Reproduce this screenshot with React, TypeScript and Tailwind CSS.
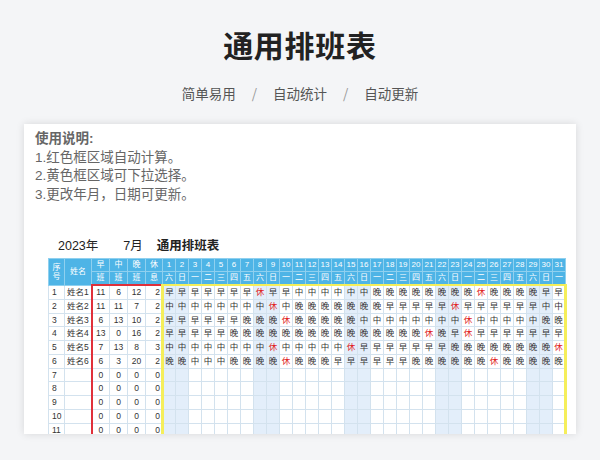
const rows: string[] = [
  "早早早早早早早休早早中中中中中中晚晚晚晚晚晚晚晚休晚晚晚晚早早",
  "中中中中中中中中休中晚晚晚晚晚晚晚早早早早早休早早早早早早中中",
  "早早早早早早晚晚晚休晚晚晚晚晚中中中中中中中中休中中中中中晚晚",
  "早早早早早晚晚晚晚晚晚晚晚晚晚晚晚晚晚晚休晚早休早早早早早早早",
  "中中中中中中中中休中中中中中休早早早早早早早晚晚晚晚晚晚晚晚休",
  "晚晚中中中晚晚晚晚休晚晚晚早早早早早早晚晚晚晚晚晚休晚晚晚晚晚",
];
const wk = ["六","日","一","二","三","四","五"];
const weekend = (d: number) => { const r = (d - 1) % 7; return r === 0 || r === 1; };

export default function App() {
  const days = Array.from({ length: 31 }, (_, i) => i + 1);
  const cell = "border border-[#d3e2ee] text-center p-0";
  return (
    <div className="w-[600px] h-[460px] bg-[#f4f5f7] overflow-hidden" style={{ fontFamily: '"Noto Sans CJK SC", "Noto Sans", sans-serif' }}>
      <div className="pt-[22px] text-center text-[30px] font-bold text-[#222] leading-[44px] tracking-wide">通用排班表</div>
      <div className="mt-[17px] flex justify-center gap-[16px] text-[13.5px] text-[#555] leading-[20px]">
        <span>简单易用</span><span className="text-[#999]">/</span><span>自动统计</span><span className="text-[#999]">/</span><span>自动更新</span>
      </div>
      <div className="mx-[24px] mt-[21px] h-[310px] bg-white shadow-[0_0_8px_rgba(0,0,0,0.12)] overflow-hidden pl-[11px] pt-[6px]">
        <div className="text-[13.5px] leading-[18.5px] text-[#666]" style={{ fontFamily: '"Liberation Sans", "Noto Sans CJK SC", sans-serif' }}>
          <div className="font-bold">使用说明:</div>
          <div>1.红色框区域自动计算。</div>
          <div>2.黄色框区域可下拉选择。</div>
          <div>3.更改年月，日期可更新。</div>
        </div>
        <div className="mt-[34px] ml-[23px] text-[12.5px] font-bold text-[#222] leading-[16px] flex" style={{ fontFamily: '"Liberation Sans", "Noto Sans CJK SC", sans-serif' }}>
          <span className="font-normal">2023年</span><span className="ml-[25px] font-normal">7月</span><span className="ml-[14px]">通用排班表</span>
        </div>
        <table className="ml-[13px] mt-[4px] border-collapse table-fixed text-[8.5px] text-[#333]" style={{ fontFamily: '"Liberation Sans", "Noto Sans CJK SC", sans-serif' }}>
          <colgroup>
            <col className="w-[16px]" /><col className="w-[27px]" />
            <col className="w-[18px]" /><col className="w-[18px]" /><col className="w-[18px]" /><col className="w-[17px]" />
            {days.map(d => <col key={d} className="w-[13px]" />)}
          </colgroup>
          <thead className="bg-[#4eb4e6] text-white text-[8px]">
            <tr className="h-[12px]">
              <th rowSpan={2} className="border border-[#8fd0ef] font-normal leading-[9px]">序<br />号</th>
              <th rowSpan={2} className="border border-[#8fd0ef] font-normal">姓名</th>
              {["早","中","晚","休"].map(s => <th key={s} className="border border-[#8fd0ef] font-normal">{s}</th>)}
              {days.map(d => <th key={d} className="border border-[#8fd0ef] font-normal">{d}</th>)}
            </tr>
            <tr className="h-[12px]">
              {["班","班","班","息"].map((s, i) => <th key={i} className="border border-[#8fd0ef] font-normal">{s}</th>)}
              {days.map(d => <th key={d} className="border border-[#8fd0ef] font-normal">{wk[(d - 1) % 7]}</th>)}
            </tr>
          </thead>
          <tbody>
            {Array.from({ length: 11 }, (_, r) => {
              const s = rows[r];
              const cnt = (c: string) => (s ? [...s].filter(x => x === c).length : 0);
              const top = r === 0 ? " border-t-2 border-t-[#e0303a]" : "";
              return (
                <tr key={r} className="h-[13.5px]">
                  <td className={cell + " text-left pl-[3px]"}>{r + 1}</td>
                  <td className={cell}>{s ? `姓名${r + 1}` : ""}</td>
                  <td className={cell + " border-l-2 border-l-[#e0303a]" + top}>{cnt("早")}</td>
                  <td className={cell + top}>{cnt("中")}</td>
                  <td className={cell + top}>{cnt("晚")}</td>
                  <td className={cell + " text-right pr-[1px] border-r-2 border-r-[#e0303a]" + top}>{cnt("休")}</td>
                  {days.map(d => {
                    const v = s ? s[d - 1] : "";
                    const cls = cell + (weekend(d) ? " bg-[#e3eefa]" : "") + (v === "休" ? " text-[#e02020]" : "") +
                      (d === 1 ? " border-l-[3px] border-l-[#f5ee5a]" : "") + (d === 31 ? " border-r-[3px] border-r-[#f5ee5a]" : "") +
                      (r === 0 ? " border-t-2 border-t-[#f5ee5a]" : "");
                    return <td key={d} className={cls}>{v}</td>;
                  })}
                </tr>
              );
            })}
          </tbody>
        </table>
      </div>
    </div>
  );
}
